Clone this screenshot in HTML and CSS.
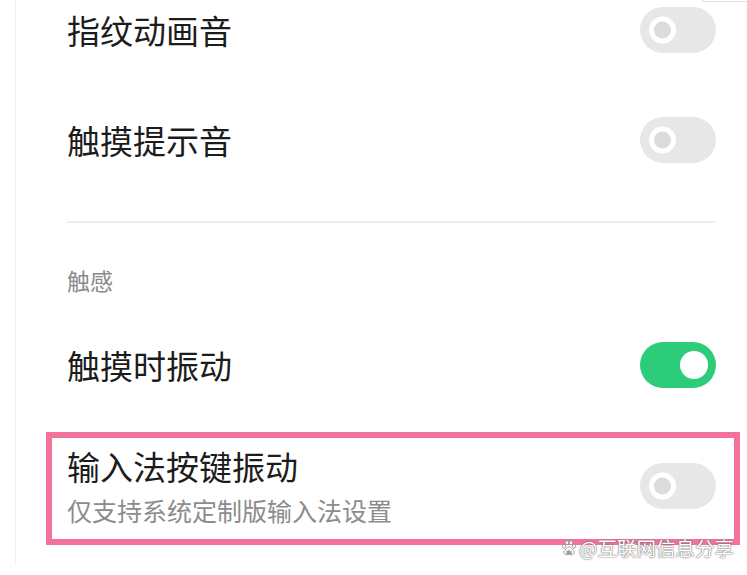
FILE: index.html
```html
<!DOCTYPE html>
<html lang="zh-CN">
<head>
<meta charset="utf-8">
<link rel="stylesheet" href="styles.css">
</head>
<body>
<div class="page">
  <div class="list">
    <div class="row first">
      <span class="title">指纹动画音</span>
      <span class="switch off"><span class="knob"></span></span>
    </div>
    <div class="row second">
      <span class="title">触摸提示音</span>
      <span class="switch off"><span class="knob"></span></span>
    </div>
    <div class="divider"></div>
    <div class="section">触感</div>
    <div class="row third">
      <span class="title">触摸时振动</span>
      <span class="switch on"><span class="knob"></span></span>
    </div>
    <div class="row highlight">
      <div class="texts">
        <span class="title">输入法按键振动</span>
        <span class="sub">仅支持系统定制版输入法设置</span>
      </div>
      <span class="switch off lower"><span class="knob"></span></span>
    </div>
  </div>
</div>
<div class="corner"></div>
<div class="watermark">
  <svg class="paw" width="16" height="16" viewBox="0 0 16 16" aria-hidden="true">
    <g fill="#fff" stroke="#9a9a9a" stroke-width="0.9">
      <ellipse cx="3" cy="6.3" rx="1.6" ry="2"/>
      <ellipse cx="6" cy="2.8" rx="1.6" ry="2"/>
      <ellipse cx="10" cy="2.8" rx="1.6" ry="2"/>
      <ellipse cx="13" cy="6.3" rx="1.6" ry="2"/>
      <path d="M8 6.8c-2 0-2.6 2.1-4 3.2-1.3 1-1.6 2.4-1 3.5.6 1.2 2 1.4 3 1.1 1-.3 1.4-.4 2-.4s1 .1 2 .4c1 .3 2.4.1 3-1.1.6-1.1.3-2.5-1-3.5-1.4-1.1-2-3.2-4-3.2z"/>
    </g>
    <text x="8" y="13.6" font-size="4.6" text-anchor="middle" fill="#9a9a9a" font-family="Liberation Sans, sans-serif">du</text>
  </svg>
  <span>@互联网信息分享</span>
</div>
</body>
</html>
```
FILE: styles.css
```css
* { box-sizing: border-box; }
html, body {
  margin: 0;
  padding: 0;
  background: #ffffff;
}
body {
  width: 747px;
  height: 575px;
  overflow: hidden;
  position: relative;
  font-family: "Noto Sans CJK SC", "Noto Sans", sans-serif;
  color: #1c1c1c;
}
.page {
  margin-left: 15px;
  height: 565px;
  border-left: 1px solid #f3f3f3;
}
.list {
  padding-left: 51px;
  padding-right: 31px;
  display: flex;
  flex-direction: column;
}
.row {
  height: 60px;
  display: flex;
  align-items: center;
  justify-content: space-between;
}
.title {
  font-size: 33px;
  line-height: 40px;
  color: #1c1c1c;
}
.second { margin-top: 50px; }
.divider {
  margin-top: 51px;
  height: 2px;
  background: #ededed;
}
.section {
  margin-top: 42px;
  height: 30px;
  line-height: 30px;
  font-size: 23px;
  color: #8a8a8a;
}
.third { margin-top: 40px; }
.highlight {
  margin-top: 37px;
  margin-left: -21px;
  margin-right: -24px;
  height: 113px;
  border: 6px solid #f2729a;
  padding: 6px 18px 12px 15px;
  align-items: center;
}
.texts {
  display: flex;
  flex-direction: column;
  gap: 9px;
}
.sub {
  font-size: 25px;
  line-height: 30px;
  color: #8c8c8c;
}
.switch {
  width: 76px;
  height: 46px;
  border-radius: 23px;
  position: relative;
  flex: none;
}
.switch.off { background: #e7e7e7; }
.switch.on { background: #2dcc7a; }
.switch .knob {
  position: absolute;
  top: 50%;
  border-radius: 50%;
  transform: translateY(-50%);
}
.switch.off .knob {
  left: 9px;
  width: 27px;
  height: 27px;
  background: #dcdcdc;
  border: 5px solid #ffffff;
}
.switch.on .knob {
  right: 8px;
  width: 28px;
  height: 28px;
  background: #ffffff;
}
.switch.lower { margin-top: 0; }
.corner {
  position: absolute;
  top: -20px;
  left: 702px;
  width: 60px;
  height: 22px;
  border: 1px solid #e2e2e2;
  background: #fff;
}
.watermark {
  position: absolute;
  left: 561px;
  top: 536px;
  display: flex;
  align-items: center;
  gap: 2px;
  font-size: 19.5px;
  line-height: 24px;
  color: #ffffff;
  text-shadow: 0 0 1px #7a7a7a, 0 0 1px #7a7a7a, 0 0 2px rgba(0,0,0,0.35);
}
```
